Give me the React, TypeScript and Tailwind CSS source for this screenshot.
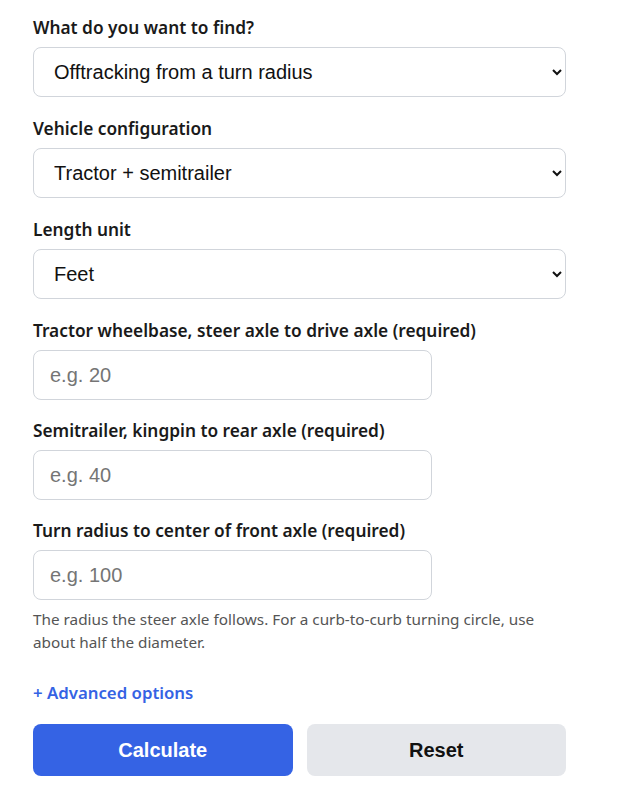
import { useState } from 'react';

const labelCls = 'block text-[17.3px] font-semibold leading-6 text-[#1a1a1a] mb-[7px]';
const controlCls =
  'h-[50px] rounded-lg border border-[#d1d5db] bg-white px-4 text-[20px] text-[#111] outline-none font-["Liberation_Sans",Arial,sans-serif]';

export default function App() {
  const [goal, setGoal] = useState('offtrack');
  const [config, setConfig] = useState('semi');
  const [unit, setUnit] = useState('ft');
  const [showAdvanced, setShowAdvanced] = useState(false);

  return (
    <div className="min-h-screen bg-white font-['Noto_Sans',sans-serif]">
      <div className="w-[533px] ml-[33px] pt-4">
        <div className="mb-[20px]">
          <label className={labelCls}>What do you want to find?</label>
          <select
            value={goal}
            onChange={e => setGoal(e.target.value)}
            className={`${controlCls} w-full`}
          >
            <option value="offtrack">Offtracking from a turn radius</option>
            <option value="radius">Turn radius from offtracking</option>
          </select>
        </div>

        <div className="mb-[20px]">
          <label className={labelCls}>Vehicle configuration</label>
          <select
            value={config}
            onChange={e => setConfig(e.target.value)}
            className={`${controlCls} w-full`}
          >
            <option value="semi">Tractor + semitrailer</option>
            <option value="double">Tractor + double trailers</option>
          </select>
        </div>

        <div className="mb-[20px]">
          <label className={labelCls}>Length unit</label>
          <select
            value={unit}
            onChange={e => setUnit(e.target.value)}
            className={`${controlCls} w-full`}
          >
            <option value="ft">Feet</option>
            <option value="m">Meters</option>
          </select>
        </div>

        <div className="mb-[19px]">
          <label className={labelCls}>Tractor wheelbase, steer axle to drive axle (required)</label>
          <input
            type="text"
            placeholder="e.g. 20"
            className={`${controlCls} w-[399px] placeholder:text-[#757575]`}
          />
        </div>

        <div className="mb-[19px]">
          <label className={labelCls}>Semitrailer, kingpin to rear axle (required)</label>
          <input
            type="text"
            placeholder="e.g. 40"
            className={`${controlCls} w-[399px] placeholder:text-[#757575]`}
          />
        </div>

        <div>
          <label className={labelCls}>Turn radius to center of front axle (required)</label>
          <input
            type="text"
            placeholder="e.g. 100"
            className={`${controlCls} w-[399px] placeholder:text-[#757575]`}
          />
          <p className="mt-[8px] text-[15.3px] leading-[23px] text-[#555]">
            The radius the steer axle follows. For a curb-to-curb turning circle, use about half the
            diameter.
          </p>
        </div>

        <button
          type="button"
          onClick={() => setShowAdvanced(v => !v)}
          className="mt-[27px] text-[16.8px] font-semibold leading-6 text-[#3563e4]"
        >
          {showAdvanced ? '− Advanced options' : '+ Advanced options'}
        </button>

        <div className="mt-[19px] flex gap-[14px] font-['Liberation_Sans',Arial,sans-serif]">
          <button className="h-[52px] flex-1 rounded-lg bg-[#3563e4] text-[20px] font-bold text-white">
            Calculate
          </button>
          <button className="h-[52px] flex-1 rounded-lg bg-[#e5e7eb] text-[20px] font-bold text-[#111]">
            Reset
          </button>
        </div>
      </div>
    </div>
  );
}
